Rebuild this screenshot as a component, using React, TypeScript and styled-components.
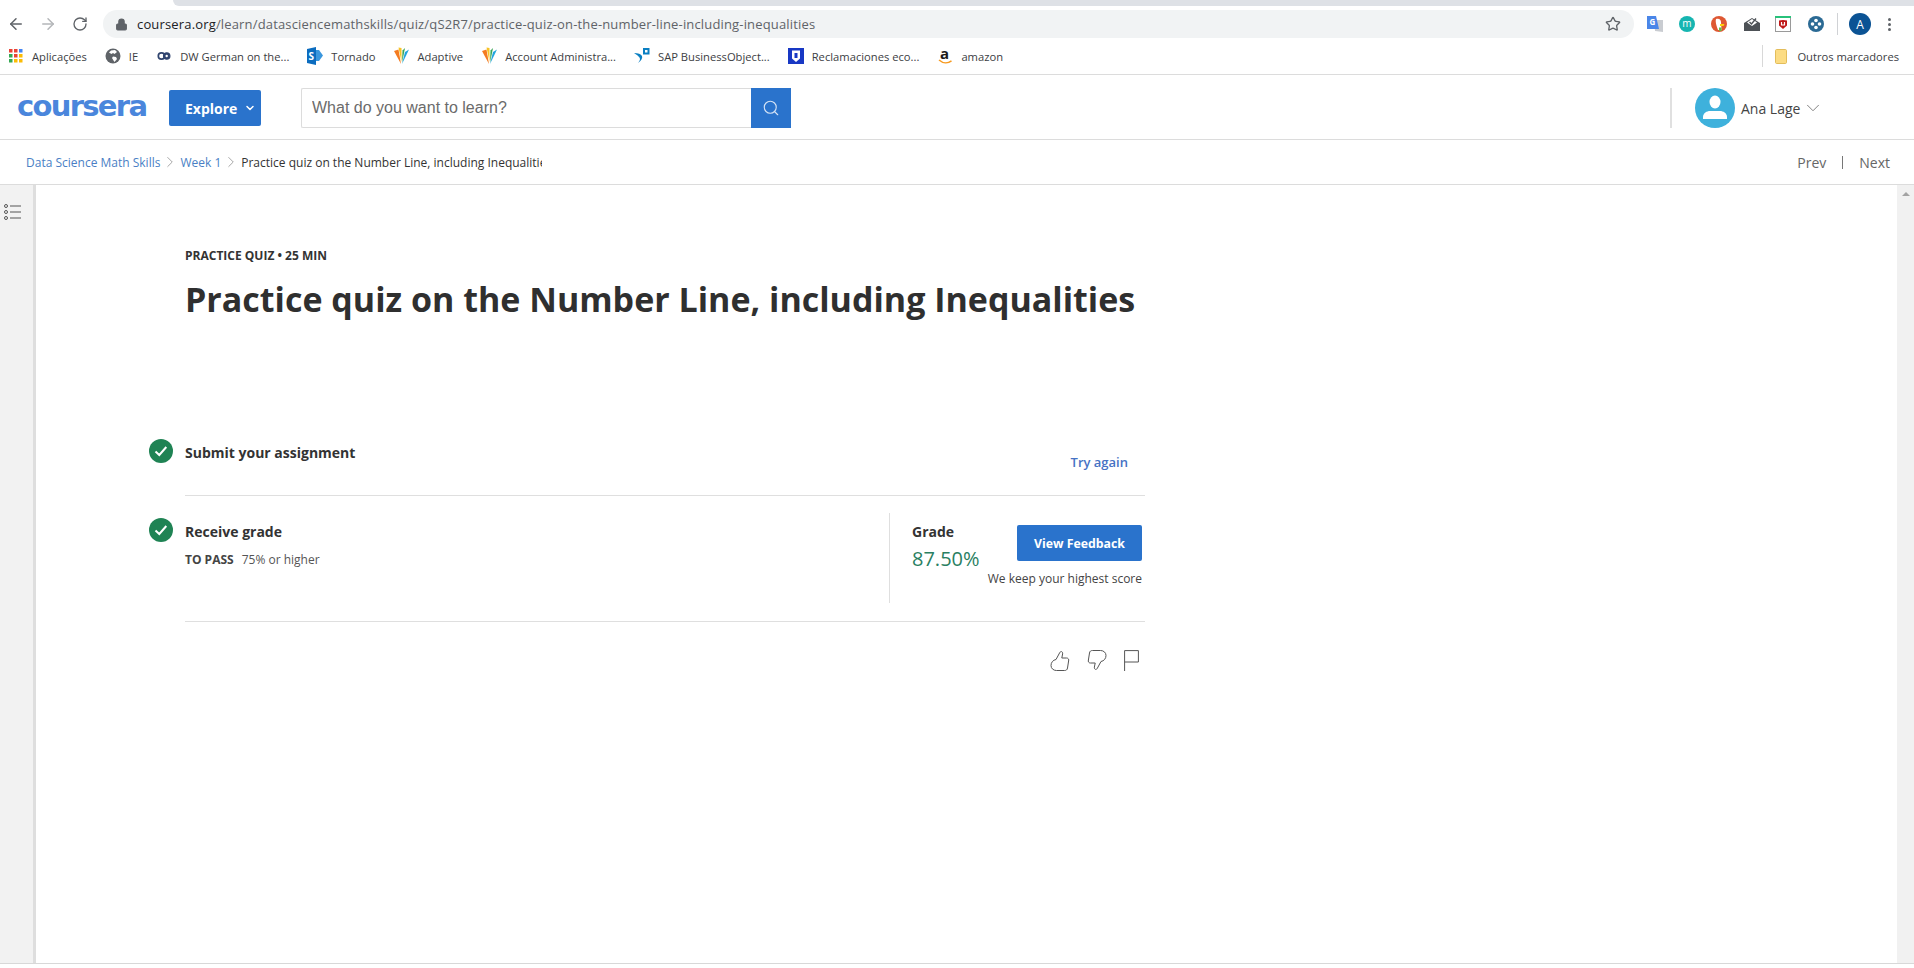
import styled, { createGlobalStyle } from 'styled-components';
import { ArrowLeft, ArrowRight, ChevronDown, ChevronRight, Lock, RotateCw, Search, Star } from 'lucide-react';

const GlobalStyle = createGlobalStyle`
  html, body {
    margin: 0;
    padding: 0;
    background: #fff;
    overflow: hidden;
  }
  * {
    box-sizing: border-box;
  }
`;

const Page = styled.div`
  display: flex;
  flex-direction: column;
  width: 1914px;
  height: 968px;
  font-family: 'Open Sans', sans-serif;
  color: #2f2f2f;
  overflow: hidden;
`;

/* browser chrome */
const TabStrip = styled.div`
  display: flex;
  height: 6px;
  flex: none;
`;

const ActiveTab = styled.div`
  width: 173px;
  background: #fff;
`;

const TabRest = styled.div`
  flex: 1;
  background: #dee1e6;
  border-bottom-left-radius: 6px;
`;

const Toolbar = styled.div`
  display: flex;
  align-items: center;
  height: 32px;
  padding: 4px 0 0 0;
  flex: none;
`;

const NavButton = styled.div<{ $muted?: boolean }>`
  display: flex;
  align-items: center;
  justify-content: center;
  width: 32px;
  color: ${(p) => (p.$muted ? '#b4b6b9' : '#5f6368')};
`;

const NavGroup = styled.div`
  display: flex;
  width: 103px;
`;

const Omnibox = styled.div`
  display: flex;
  align-items: center;
  gap: 9px;
  width: 1531px;
  height: 28px;
  padding: 0 13px 0 12px;
  background: #f1f3f4;
  border-radius: 14px;
  color: #5f6368;
`;

const Url = styled.div`
  flex: 1;
  font-size: 13px;
  letter-spacing: 0.16px;
  color: #5f6368;
  white-space: nowrap;
`;

const UrlHost = styled.span`
  color: #202124;
`;

const Extensions = styled.div`
  display: flex;
  align-items: center;
  flex: 1;
  padding-left: 13px;
`;

const ExtSlot = styled.div<{ $w: number }>`
  display: flex;
  justify-content: flex-start;
  width: ${(p) => p.$w}px;
`;

const ToolbarRule = styled.div`
  width: 1px;
  height: 22px;
  margin-right: 11px;
  background: #d0d2d5;
`;

const ProfileBadge = styled.div`
  display: flex;
  align-items: center;
  justify-content: center;
  width: 22px;
  height: 22px;
  margin-right: 17px;
  border-radius: 50%;
  background: #0b5394;
  color: #fff;
  font-size: 12px;
`;

const MenuDots = styled.div`
  display: flex;
  flex-direction: column;
  gap: 2px;
`;

const MenuDot = styled.span`
  width: 3px;
  height: 3px;
  border-radius: 50%;
  background: #5f6368;
`;

const BookmarkBar = styled.div`
  display: flex;
  align-items: center;
  justify-content: space-between;
  height: 37px;
  padding: 0 15px 0 8px;
  border-bottom: 1px solid #dcdcdc;
  flex: none;
`;

const BookmarkList = styled.div`
  display: flex;
  align-items: center;
  gap: 18px;
`;

const Bookmark = styled.div`
  display: flex;
  align-items: center;
  gap: 8px;
  font-size: 11.2px;
  color: #3c4043;
  white-space: nowrap;
`;

const BookmarkIcon = styled.span`
  display: flex;
  justify-content: center;
  width: 16px;
`;

const OtherBookmarks = styled(Bookmark)`
  gap: 10px;
  padding-left: 12px;
  border-left: 1px solid #d8d8d8;
  height: 22px;
`;

/* coursera header */
const Header = styled.header`
  display: flex;
  align-items: center;
  height: 65px;
  padding: 2px 0 0 17px;
  border-bottom: 1px solid #dcdcdc;
  flex: none;
`;

const Logo = styled.div`
  width: 152px;
  margin-bottom: 4px;
  font-family: 'DejaVu Sans', sans-serif;
  font-weight: 700;
  font-size: 29px;
  letter-spacing: -1.7px;
  line-height: 36px;
  color: #4a86dc;
`;

const ExploreButton = styled.button`
  display: flex;
  align-items: center;
  gap: 7px;
  width: 92px;
  height: 36px;
  padding: 0 0 0 16px;
  border: 0;
  border-radius: 2px;
  background: #2a73cc;
  color: #fff;
  font-family: 'Open Sans', sans-serif;
  font-weight: 700;
  font-size: 14px;
`;

const SearchForm = styled.div`
  display: flex;
  width: 490px;
  height: 40px;
  margin-left: 40px;
`;

const SearchInput = styled.input`
  flex: 1;
  padding: 0 10px;
  border: 1px solid #dcdcdc;
  border-right: 0;
  border-radius: 2px 0 0 2px;
  font-family: 'Liberation Sans', Arial, sans-serif;
  font-size: 16px;
  &::placeholder {
    color: #6b6b6b;
    opacity: 1;
  }
`;

const SearchButton = styled.button`
  display: flex;
  align-items: center;
  justify-content: center;
  width: 40px;
  padding: 0;
  border: 0;
  background: #2a73cc;
  color: #d5e3f5;
`;

const UserArea = styled.div`
  display: flex;
  align-items: center;
  height: 40px;
  margin-left: auto;
  width: 244px;
  padding-left: 23px;
  border-left: 2px solid #e0e0e0;
`;

const Avatar = styled.div`
  width: 40px;
  height: 40px;
  border-radius: 50%;
  background: #3eb1dc;
`;

const UserName = styled.span`
  margin-left: 6px;
  font-size: 14px;
  color: #444;
`;

const UserCaret = styled.span`
  display: flex;
  margin-left: 2px;
  color: #777;
`;

const CrumbBar = styled.div`
  display: flex;
  align-items: center;
  justify-content: space-between;
  height: 45px;
  padding: 0 24px 0 26px;
  border-bottom: 1px solid #dcdcdc;
  flex: none;
`;

const Crumbs = styled.div`
  display: flex;
  align-items: center;
  font-size: 12px;
`;

const CrumbLink = styled.a`
  color: #4a7fc5;
  white-space: nowrap;
`;

const CrumbSep = styled.span`
  display: flex;
  justify-content: center;
  width: 20px;
  color: #8a8a8a;
`;

const CrumbCurrent = styled.span`
  width: 301px;
  overflow: hidden;
  white-space: nowrap;
  color: #333;
`;

const Pager = styled.div`
  display: flex;
  align-items: center;
  gap: 16px;
  font-size: 14px;
  color: #666;
`;

const PagerRule = styled.span`
  width: 1px;
  height: 13px;
  background: #777;
`;

/* quiz body */
const Main = styled.div`
  display: flex;
  flex: 1;
  min-height: 0;
`;

const Sidebar = styled.aside`
  width: 36px;
  padding: 19px 0 0 4px;
  background: #f2f2f2;
  border-right: 3px solid #dedede;
  color: #555;
  flex: none;
`;

const Content = styled.main`
  flex: 1;
  padding: 63px 0 0 113px;
`;

const Eyebrow = styled.div`
  margin-left: 36px;
  font-size: 12px;
  line-height: 16px;
  font-weight: 700;
  color: #333;
`;

const Title = styled.h1`
  margin: 10px 0 0 36px;
  font-size: 34px;
  line-height: 50px;
  font-weight: 700;
  color: #2f2f2f;
`;

const Steps = styled.div`
  width: 996px;
  margin-top: 115px;
`;

const StepRow = styled.div`
  display: grid;
  grid-template-columns: 24px 1fr;
  column-gap: 12px;
`;

const CheckBadge = styled.div<{ $top: number }>`
  display: flex;
  align-items: center;
  justify-content: center;
  width: 24px;
  height: 24px;
  margin-top: ${(p) => p.$top}px;
  border-radius: 50%;
  background: #1f8354;
  color: #fff;
`;

const SubmitBody = styled.div`
  display: flex;
  justify-content: space-between;
  height: 57px;
  border-bottom: 1px solid #dfdfdf;
`;

const StepTitle = styled.div`
  font-size: 14px;
  line-height: 20px;
  font-weight: 700;
  color: #333;
`;

const SubmitTitle = styled(StepTitle)`
  margin-top: 4px;
`;

const TryAgain = styled.a`
  margin: 13px 17px 0 0;
  font-size: 13px;
  line-height: 20px;
  font-weight: 600;
  color: #4672c4;
`;

const GradeBody = styled.div`
  display: flex;
  justify-content: space-between;
  height: 126px;
  padding: 17px 0 18px;
  border-bottom: 1px solid #dfdfdf;
`;

const GradeLeft = styled.div`
  padding-top: 9px;
`;

const PassLine = styled.div`
  display: flex;
  gap: 8px;
  margin-top: 10px;
  font-size: 12px;
  line-height: 16px;
  color: #555;
`;

const PassLabel = styled.span`
  font-weight: 700;
  color: #444;
`;

const GradePanel = styled.div`
  display: flex;
  justify-content: space-between;
  width: 256px;
  padding: 9px 3px 0 22px;
  border-left: 1px solid #dfdfdf;
`;

const GradeScore = styled.div`
  font-size: 20px;
  line-height: 28px;
  margin-top: 3px;
  color: #2a7f62;
`;

const FeedbackCol = styled.div`
  display: flex;
  flex-direction: column;
  align-items: flex-end;
  margin-top: 3px;
`;

const FeedbackButton = styled.button`
  width: 125px;
  height: 36px;
  padding: 0;
  border: 0;
  border-radius: 2px;
  background: #2a73cc;
  color: #fff;
  font-family: 'Open Sans', sans-serif;
  font-size: 12.3px;
  font-weight: 700;
`;

const KeepNote = styled.div`
  margin-top: 8px;
  font-size: 12px;
  line-height: 20px;
  white-space: nowrap;
  color: #444;
`;

const Reactions = styled.div`
  display: flex;
  justify-content: flex-end;
  gap: 17px;
  margin-top: 28px;
  padding-right: 6px;
  color: #555;
`;

const ScrollTrack = styled.div`
  display: flex;
  justify-content: center;
  width: 17px;
  padding-top: 7px;
  background: #f1f1f1;
  flex: none;
`;

const ScrollArrow = styled.span`
  width: 0;
  height: 0;
  border-left: 4px solid transparent;
  border-right: 4px solid transparent;
  border-bottom: 4px solid #a3a3a3;
`;

const BottomEdge = styled.div`
  height: 5px;
  border-top: 1px solid #d8d8d8;
  flex: none;
`;

function AppsIcon() {
  const colors = ['#ea4335', '#ea4335', '#4285f4', '#34a853', '#ea4335', '#fbbc05', '#34a853', '#fbbc05', '#fbbc05'];
  return (
    <svg width="14" height="14" viewBox="0 0 14 14">
      {colors.map((c, i) => (
        <rect key={i} x={(i % 3) * 5} y={Math.floor(i / 3) * 5} width="3.5" height="3.5" fill={c} />
      ))}
    </svg>
  );
}

function GlobeIcon() {
  return (
    <svg width="16" height="16" viewBox="0 0 16 16">
      <circle cx="8" cy="8" r="7.5" fill="#5f6368" />
      <path d="M6 2.5 10 2l2 2-2.5 2L8 5 6.5 6 4 4.5zM8 8.5l3 .5 1 2-2.5 3-1-1.5L7 10z" fill="#fff" />
    </svg>
  );
}

function DwIcon() {
  return (
    <svg width="14" height="16" viewBox="0 0 14 16">
      <circle cx="4.5" cy="8" r="3.2" fill="none" stroke="#31456f" strokeWidth="1.7" />
      <circle cx="9.7" cy="8" r="3.2" fill="#31456f" stroke="#31456f" strokeWidth="1.2" />
      <circle cx="9.7" cy="8" r="1.2" fill="#fff" />
    </svg>
  );
}

function SharePointIcon() {
  return (
    <svg width="16" height="18" viewBox="0 0 16 18">
      <path d="M0 2 9 0v18l-9-2z" fill="#0b6cbf" />
      <path d="M9 3h3l4 5.500L12 14H9z" fill="#3a96dd" />
      <text x="1.500" y="13" fontSize="10" fontWeight="700" fill="#fff" fontFamily="Open Sans, sans-serif">S</text>
    </svg>
  );
}

function AdaptiveIcon() {
  return (
    <svg width="15" height="18" viewBox="0 0 15 18">
      <path d="M0 4 4.500 2.500 7 17z" fill="#f47b20" />
      <path d="M4.500 0.500 7.500 1 7.500 15z" fill="#f7c325" />
      <path d="M8 16 8.500 3.500 11 1z" fill="#3aa655" />
      <path d="M8 17 11 5 15 2.500z" fill="#20a5de" />
    </svg>
  );
}

function SapIcon() {
  return (
    <svg width="16" height="16" viewBox="0 0 16 16">
      <rect x="9" y="0" width="6.500" height="6.500" fill="#0a7fc2" />
      <rect x="11" y="2" width="2.500" height="2.500" fill="#fff" />
      <path d="M0 5c4 0 7 1 8 3 .8 2-.8 5-4 7 2-2.500 2.500-4 1.500-5.500C4.500 8 2.500 6.500 0 5z" fill="#0a7fc2" />
    </svg>
  );
}

function MadridIcon() {
  return (
    <svg width="16" height="16" viewBox="0 0 16 16">
      <rect width="16" height="16" fill="#1838c4" />
      <path d="M4 2.500h8v8L8 14l-4-3.500z" fill="#fff" />
      <rect x="6.500" y="5" width="3" height="5" fill="#1838c4" />
    </svg>
  );
}

function AmazonIcon() {
  return (
    <svg width="15" height="17" viewBox="0 0 15 17">
      <text x="2" y="11" fontSize="15" fontWeight="700" fill="#1a1a1a" fontFamily="Open Sans, sans-serif">a</text>
      <path d="M1 12c4 3.500 9 3.500 12.500.8" fill="none" stroke="#f79a1f" strokeWidth="1.500" />
    </svg>
  );
}

function FolderIcon() {
  return (
    <svg width="12" height="15" viewBox="0 0 12 15">
      <path d="M.5 1.500C.5 1 1 .5 1.500.5h9c.5 0 1 .5 1 1v12c0 .5-.5 1-1 1h-9c-.5 0-1-.5-1-1z" fill="#fcdc83" stroke="#e3bd5b" />
    </svg>
  );
}

function TranslateExt() {
  return (
    <svg width="16" height="18" viewBox="0 0 16 18">
      <path d="M7 5h9v12l-8-1z" fill="#c9ccd1" />
      <path d="M0 1h9l3 13H0z" fill="#4a86e8" />
      <text x="2.500" y="10" fontSize="8" fontWeight="700" fill="#fff" fontFamily="Open Sans, sans-serif">G</text>
    </svg>
  );
}

function MExt() {
  return (
    <svg width="16" height="16" viewBox="0 0 16 16">
      <circle cx="8" cy="8" r="8" fill="#16b5b1" />
      <text x="8" y="11" fontSize="10" textAnchor="middle" fill="#fff" fontFamily="Open Sans, sans-serif">m</text>
    </svg>
  );
}

function DuckExt() {
  return (
    <svg width="16" height="16" viewBox="0 0 16 16">
      <circle cx="8" cy="8" r="8" fill="#de5833" />
      <path d="M5 3c3-1 5 .5 5 3l.5 8H7C6 11 4 6 5 3z" fill="#fff" />
      <path d="M9 8h4.500l-1 2H9z" fill="#fdd20a" />
      <path d="M8 11.500h2.500V15H8z" fill="#65bc46" />
    </svg>
  );
}

function MailExt() {
  return (
    <svg width="16" height="16" viewBox="0 0 16 16">
      <path d="M0 7 8 2l8 5v8H0z" fill="#4d5156" />
      <path d="M3 6.500 8 3l5 3.500L8 10z" fill="#fff" />
      <path d="m5.500 6 2 2 4.500-5.500" fill="none" stroke="#4d5156" strokeWidth="1.400" />
    </svg>
  );
}

function McafeeExt() {
  return (
    <svg width="16" height="16" viewBox="0 0 16 16">
      <rect x=".5" y=".5" width="15" height="15" fill="#fff" stroke="#9a9a9a" />
      <rect width="16" height="2" fill="#27c27a" />
      <path d="M4 4.500 8 4l4 .5v5L8 13 4 9.500z" fill="#c01818" />
      <path d="M6.500 6v3h3V6" fill="none" stroke="#fff" strokeWidth="1.200" />
    </svg>
  );
}

function DpadExt() {
  return (
    <svg width="16" height="16" viewBox="0 0 16 16">
      <circle cx="8" cy="8" r="8" fill="#2b6a94" />
      <circle cx="8" cy="4.500" r="1.800" fill="#fff" />
      <circle cx="8" cy="11.500" r="1.800" fill="#fff" />
      <circle cx="4.500" cy="8" r="1.800" fill="#fff" />
      <circle cx="11.500" cy="8" r="1.800" fill="#fff" />
    </svg>
  );
}

function AvatarFigure() {
  return (
    <svg width="40" height="40" viewBox="0 0 40 40">
      <ellipse cx="20" cy="14" rx="5.500" ry="6.500" fill="#fff" />
      <path d="M8 31v-2c0-4 4-6 7-6h10c3 0 7 2 7 6v2z" fill="#fff" />
    </svg>
  );
}

function SidebarListIcon() {
  return (
    <svg width="18" height="16" viewBox="0 0 18 16" display="block">
      <g fill="none" stroke="currentColor">
        <circle cx="2" cy="2" r="1.500" />
        <circle cx="2" cy="8" r="1.500" />
        <circle cx="2" cy="14" r="1.500" />
        <path d="M6 2h11M6 8h11M6 14h11" />
      </g>
    </svg>
  );
}

const thumbPath =
  'M6 9.500 9.800 2.500C10.800 .8 13 1.500 12.600 4L11.800 8H16.500C18.500 8 19 9.500 18.600 11L17.500 18C17.200 20 16 20.500 14.500 20.500H6.500C3.500 20.500 1 18.500 1 15.500 1 12.500 3 10 6 9.500z';

function ThumbUpIcon() {
  return (
    <svg width="20" height="21" viewBox="0 0 20 21">
      <path d={thumbPath} fill="none" stroke="currentColor" />
    </svg>
  );
}

function ThumbDownIcon() {
  return (
    <svg width="20" height="21" viewBox="0 0 20 21">
      <path d={thumbPath} transform="rotate(180 10 10.500)" fill="none" stroke="currentColor" />
    </svg>
  );
}

function FlagIcon() {
  return (
    <svg width="15" height="21" viewBox="0 0 15 21">
      <path d="M.6 21V.6h13.800v11.400H.6" fill="none" stroke="currentColor" />
    </svg>
  );
}

function CheckMark() {
  return (
    <svg width="14" height="12" viewBox="0 0 14 12">
      <path d="m1.500 6.500 3.800 3.500 7-8" fill="none" stroke="#fff" strokeWidth="2" />
    </svg>
  );
}

const bookmarks = [
  { icon: <AppsIcon />, label: 'Aplicações' },
  { icon: <GlobeIcon />, label: 'IE' },
  { icon: <DwIcon />, label: 'DW German on the...' },
  { icon: <SharePointIcon />, label: 'Tornado' },
  { icon: <AdaptiveIcon />, label: 'Adaptive' },
  { icon: <AdaptiveIcon />, label: 'Account Administra...' },
  { icon: <SapIcon />, label: 'SAP BusinessObject...' },
  { icon: <MadridIcon />, label: 'Reclamaciones eco...' },
  { icon: <AmazonIcon />, label: 'amazon' },
];

const extensions = [
  { icon: <TranslateExt />, w: 32 },
  { icon: <MExt />, w: 32 },
  { icon: <DuckExt />, w: 33 },
  { icon: <MailExt />, w: 31 },
  { icon: <McafeeExt />, w: 33 },
  { icon: <DpadExt />, w: 29 },
];

export default function App() {
  return (
    <>
      <GlobalStyle />
      <Page>
        <TabStrip>
          <ActiveTab />
          <TabRest />
        </TabStrip>
        <Toolbar>
          <NavGroup>
            <NavButton>
              <ArrowLeft size={18} />
            </NavButton>
            <NavButton $muted>
              <ArrowRight size={18} />
            </NavButton>
            <NavButton>
              <RotateCw size={16} />
            </NavButton>
          </NavGroup>
          <Omnibox>
            <Lock size={13} fill="#5f6368" />
            <Url>
              <UrlHost>coursera.org</UrlHost>/learn/datasciencemathskills/quiz/qS2R7/practice-quiz-on-the-number-line-including-inequalities
            </Url>
            <Star size={16} />
          </Omnibox>
          <Extensions>
            {extensions.map((ext, i) => (
              <ExtSlot key={i} $w={ext.w}>
                {ext.icon}
              </ExtSlot>
            ))}
            <ToolbarRule />
            <ProfileBadge>A</ProfileBadge>
            <MenuDots>
              <MenuDot />
              <MenuDot />
              <MenuDot />
            </MenuDots>
          </Extensions>
        </Toolbar>
        <BookmarkBar>
          <BookmarkList>
            {bookmarks.map((b) => (
              <Bookmark key={b.label}>
                <BookmarkIcon>{b.icon}</BookmarkIcon>
                {b.label}
              </Bookmark>
            ))}
          </BookmarkList>
          <OtherBookmarks>
            <FolderIcon />
            Outros marcadores
          </OtherBookmarks>
        </BookmarkBar>

        <Header>
          <Logo>coursera</Logo>
          <ExploreButton>
            Explore
            <ChevronDown size={12} strokeWidth={3} />
          </ExploreButton>
          <SearchForm>
            <SearchInput placeholder="What do you want to learn?" />
            <SearchButton>
              <Search size={18} strokeWidth={1.5} />
            </SearchButton>
          </SearchForm>
          <UserArea>
            <Avatar>
              <AvatarFigure />
            </Avatar>
            <UserName>Ana Lage</UserName>
            <UserCaret>
              <ChevronDown size={22} strokeWidth={1} />
            </UserCaret>
          </UserArea>
        </Header>
        <CrumbBar>
          <Crumbs>
            <CrumbLink>Data Science Math Skills</CrumbLink>
            <CrumbSep>
              <ChevronRight size={18} strokeWidth={1} />
            </CrumbSep>
            <CrumbLink>Week 1</CrumbLink>
            <CrumbSep>
              <ChevronRight size={18} strokeWidth={1} />
            </CrumbSep>
            <CrumbCurrent>Practice quiz on the Number Line, including Inequalities</CrumbCurrent>
          </Crumbs>
          <Pager>
            <span>Prev</span>
            <PagerRule />
            <span>Next</span>
          </Pager>
        </CrumbBar>

        <Main>
          <Sidebar>
            <SidebarListIcon />
          </Sidebar>
          <Content>
            <Eyebrow>PRACTICE QUIZ • 25 MIN</Eyebrow>
            <Title>Practice quiz on the Number Line, including Inequalities</Title>
            <Steps>
              <StepRow>
                <CheckBadge $top={0}>
                  <CheckMark />
                </CheckBadge>
                <SubmitBody>
                  <SubmitTitle>Submit your assignment</SubmitTitle>
                  <TryAgain>Try again</TryAgain>
                </SubmitBody>
              </StepRow>
              <StepRow>
                <CheckBadge $top={22}>
                  <CheckMark />
                </CheckBadge>
                <GradeBody>
                  <GradeLeft>
                    <StepTitle>Receive grade</StepTitle>
                    <PassLine>
                      <PassLabel>TO PASS</PassLabel>
                      75% or higher
                    </PassLine>
                  </GradeLeft>
                  <GradePanel>
                    <div>
                      <StepTitle>Grade</StepTitle>
                      <GradeScore>87.50%</GradeScore>
                    </div>
                    <FeedbackCol>
                      <FeedbackButton>View Feedback</FeedbackButton>
                      <KeepNote>We keep your highest score</KeepNote>
                    </FeedbackCol>
                  </GradePanel>
                </GradeBody>
              </StepRow>
              <StepRow>
                <span />
                <Reactions>
                  <ThumbUpIcon />
                  <ThumbDownIcon />
                  <FlagIcon />
                </Reactions>
              </StepRow>
            </Steps>
          </Content>
          <ScrollTrack>
            <ScrollArrow />
          </ScrollTrack>
        </Main>
        <BottomEdge />
      </Page>
    </>
  );
}
